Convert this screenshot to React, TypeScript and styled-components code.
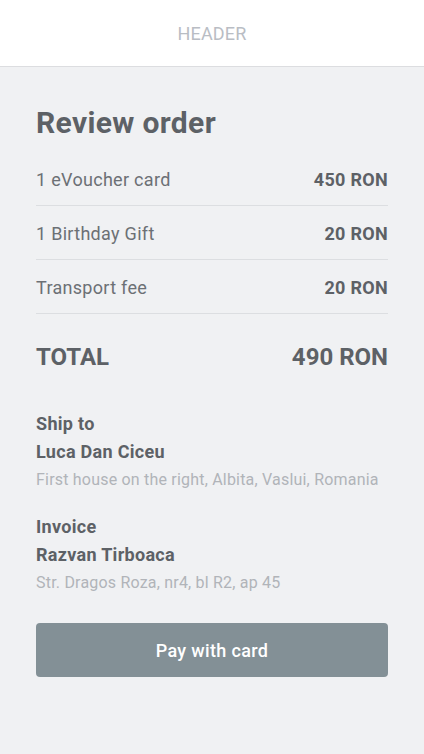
import React from "react";
import styled, { createGlobalStyle } from "styled-components";

const Global = createGlobalStyle`
  html, body {
    margin: 0;
    padding: 0;
    background: #f0f1f3;
    font-family: Roboto, "Liberation Sans", sans-serif;
  }
  * { box-sizing: border-box; }
`;

const Page = styled.div`
  min-height: 754px;
  background: #f0f1f3;
  display: flex;
  flex-direction: column;
`;

const Header = styled.header`
  height: 67px;
  background: #ffffff;
  border-bottom: 1px solid #dcdde0;
  display: flex;
  align-items: center;
  justify-content: center;
  font-size: 18px;
  color: #b9bdc4;
  letter-spacing: 0.2px;
`;

const Main = styled.main`
  padding: 38px 36px 0;
  display: flex;
  flex-direction: column;
`;

const Title = styled.h1`
  margin: 0 0 11px;
  font-size: 30px;
  line-height: 36px;
  font-weight: 700;
  color: #5d6166;
  letter-spacing: 0.35px;
`;

const Row = styled.div`
  display: flex;
  justify-content: space-between;
  align-items: center;
  padding: 18px 0 15px;
  line-height: 20px;
  font-size: 18px;
  letter-spacing: 0.3px;
  border-bottom: 1px solid #dcdee1;
`;

const Label = styled.span`
  color: #6c7075;
`;

const Value = styled.span`
  color: #5d6166;
  font-weight: 700;
`;

const TotalRow = styled.div`
  display: flex;
  justify-content: space-between;
  align-items: center;
  padding-top: 29px;
  font-size: 24px;
  line-height: 28px;
  font-weight: 700;
  color: #5d6166;
`;

const Block = styled.section<{ $gap: number }>`
  margin-top: ${(p) => p.$gap}px;
  display: flex;
  flex-direction: column;
`;

const BlockTitle = styled.div`
  font-size: 18px;
  line-height: 28px;
  font-weight: 700;
  letter-spacing: 0.3px;
  color: #5d6166;
`;

const Name = styled.div`
  font-size: 18px;
  line-height: 28px;
  font-weight: 700;
  letter-spacing: 0.3px;
  color: #5d6166;
`;

const Address = styled.div`
  font-size: 16px;
  line-height: 28px;
  letter-spacing: 0.2px;
  color: #b1b4b9;
`;

const PayButton = styled.button`
  margin-top: 26px;
  height: 54px;
  width: 100%;
  border: none;
  border-radius: 4px;
  background: #839096;
  color: #ffffff;
  font-family: Roboto, "Liberation Sans", sans-serif;
  font-size: 18px;
  font-weight: 500;
  letter-spacing: 0.35px;
  cursor: pointer;
`;

const items = [
  { label: "1 eVoucher card", value: "450 RON" },
  { label: "1 Birthday Gift", value: "20 RON" },
  { label: "Transport fee", value: "20 RON" },
];

export default function App() {
  return (
    <Page>
      <Global />
      <Header>HEADER</Header>
      <Main>
        <Title>Review order</Title>
        {items.map((it) => (
          <Row key={it.label}>
            <Label>{it.label}</Label>
            <Value>{it.value}</Value>
          </Row>
        ))}
        <TotalRow>
          <span>TOTAL</span>
          <span>490 RON</span>
        </TotalRow>
        <Block $gap={39}>
          <BlockTitle>Ship to</BlockTitle>
          <Name>Luca Dan Ciceu</Name>
          <Address>First house on the right, Albita, Vaslui, Romania</Address>
        </Block>
        <Block $gap={19}>
          <BlockTitle>Invoice</BlockTitle>
          <Name>Razvan Tirboaca</Name>
          <Address>Str. Dragos Roza, nr4, bl R2, ap 45</Address>
        </Block>
        <PayButton>Pay with card</PayButton>
      </Main>
    </Page>
  );
}
